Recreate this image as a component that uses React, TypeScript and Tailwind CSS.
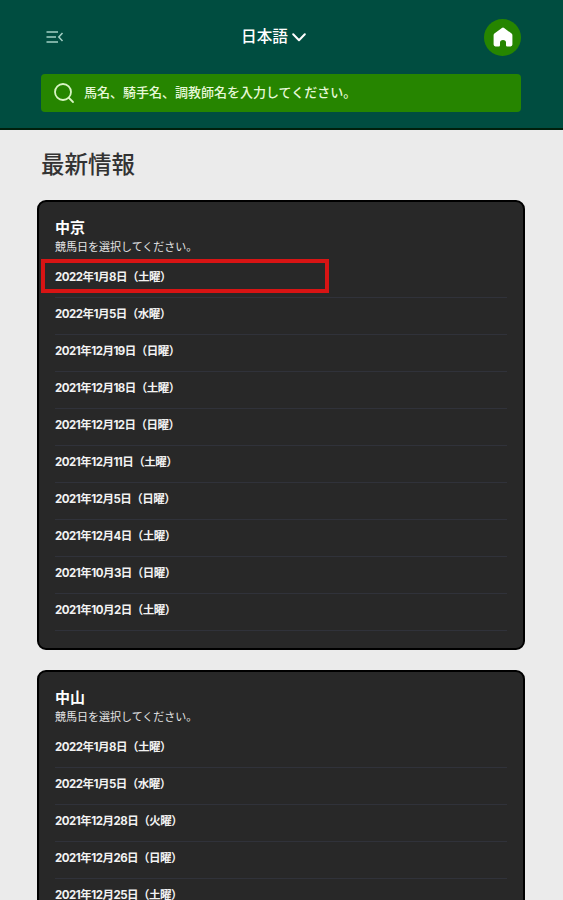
interface Course {
  name: string;
  dates: string[];
  highlighted?: number;
}

const courses: Course[] = [
  {
    name: "中京",
    highlighted: 0,
    dates: [
      "2022年1月8日（土曜）",
      "2022年1月5日（水曜）",
      "2021年12月19日（日曜）",
      "2021年12月18日（土曜）",
      "2021年12月12日（日曜）",
      "2021年12月11日（土曜）",
      "2021年12月5日（日曜）",
      "2021年12月4日（土曜）",
      "2021年10月3日（日曜）",
      "2021年10月2日（土曜）",
    ],
  },
  {
    name: "中山",
    dates: [
      "2022年1月8日（土曜）",
      "2022年1月5日（水曜）",
      "2021年12月28日（火曜）",
      "2021年12月26日（日曜）",
      "2021年12月25日（土曜）",
    ],
  },
];

function MenuIcon() {
  return (
    <svg width="18" height="14" viewBox="0 0 18 14" fill="none" stroke="#a3cfc4" strokeWidth="1.5">
      <path d="M0.5 2H12M0.5 7H10M0.5 12H12" />
      <path d="M16.5 3L12.8 7L16.5 11" />
    </svg>
  );
}

function SearchIcon() {
  return (
    <svg width="22" height="22" viewBox="0 0 22 22" fill="none" stroke="#d9f5c4" strokeWidth="1.8" strokeLinecap="round">
      <circle cx="10" cy="10" r="8" />
      <path d="M16 16L20 20" />
    </svg>
  );
}

function HomeIcon() {
  return (
    <svg width="20" height="20" viewBox="0 0 20 20" fill="#fff">
      <path d="M8.9 0.9Q10 0 11.1 0.9L18.6 6.6Q19.4 7.2 19.4 8.2V17.6Q19.4 19.4 17.6 19.4H14.2Q13 19.4 13 18.2V15.6Q13 13 10 13Q7 13 7 15.6V18.2Q7 19.4 5.8 19.4H2.4Q0.6 19.4 0.6 17.6V8.2Q0.6 7.2 1.4 6.6Z" />
    </svg>
  );
}

function Header() {
  return (
    <header className="h-[130px] border-b-2 border-[#001f0c] bg-[#004d40] pl-[41px] pr-[42px]">
      <div className="grid h-[74px] grid-cols-[1fr_auto_1fr] items-center">
        <button className="ml-[5px] justify-self-start" aria-label="menu">
          <MenuIcon />
        </button>
        <button className="-ml-[15px] flex items-center gap-1 text-[15.7px] leading-6 font-medium text-white">
          日本語
          <svg width="14" height="9" viewBox="0 0 14 9" fill="none" stroke="#fff" strokeWidth="2" strokeLinecap="round" strokeLinejoin="round">
            <path d="M1.2 1.2L7 7.2L12.8 1.2" />
          </svg>
        </button>
        <button
          className="flex size-[37px] items-center justify-center justify-self-end rounded-full bg-[#268500]"
          aria-label="home"
        >
          <HomeIcon />
        </button>
      </div>
      <div className="flex h-[38px] items-center gap-[9px] rounded bg-[#268500] pl-3">
        <SearchIcon />
        <span className="text-[13px] font-medium whitespace-nowrap text-[#e6f8d8]">
          馬名、騎手名、調教師名を入力してください。
        </span>
      </div>
    </header>
  );
}

function CourseCard({ course }: { course: Course }) {
  return (
    <section className="rounded-[9px] border-2 border-black bg-[#282828] px-4 pt-[15px] pb-[17px]">
      <h2 className="text-[15px] leading-[22px] font-bold text-white">{course.name}</h2>
      <p className="text-[11px] leading-4 text-[#e4e4e4]">競馬日を選択してください。</p>
      <ul className="pt-[6px]">
        {course.dates.map((date, i) => (
          <li
            key={date}
            className="relative flex h-[37px] items-center border-b border-[#30323a] pb-[3px] text-[11.5px] font-bold tracking-[-0.5px] text-[#f2f2f2]"
          >
            {date}
            {course.highlighted === i && (
              <span className="absolute -top-0.5 -left-[14px] h-[34px] w-[288px] border-4 border-[#d81414]" />
            )}
          </li>
        ))}
      </ul>
    </section>
  );
}

export default function App() {
  return (
    <div className="h-[900px] overflow-hidden bg-[#ebebeb] font-[Inter,'Noto_Sans_CJK_JP',sans-serif]">
      <Header />
      <main className="pr-[38px] pl-[37px]">
        <h1 className="pt-[19px] pb-[19px] pl-1 text-[23.5px] leading-8 font-medium text-[#333]">最新情報</h1>
        <div className="flex flex-col gap-5">
          {courses.map((course) => (
            <CourseCard key={course.name} course={course} />
          ))}
        </div>
      </main>
    </div>
  );
}
